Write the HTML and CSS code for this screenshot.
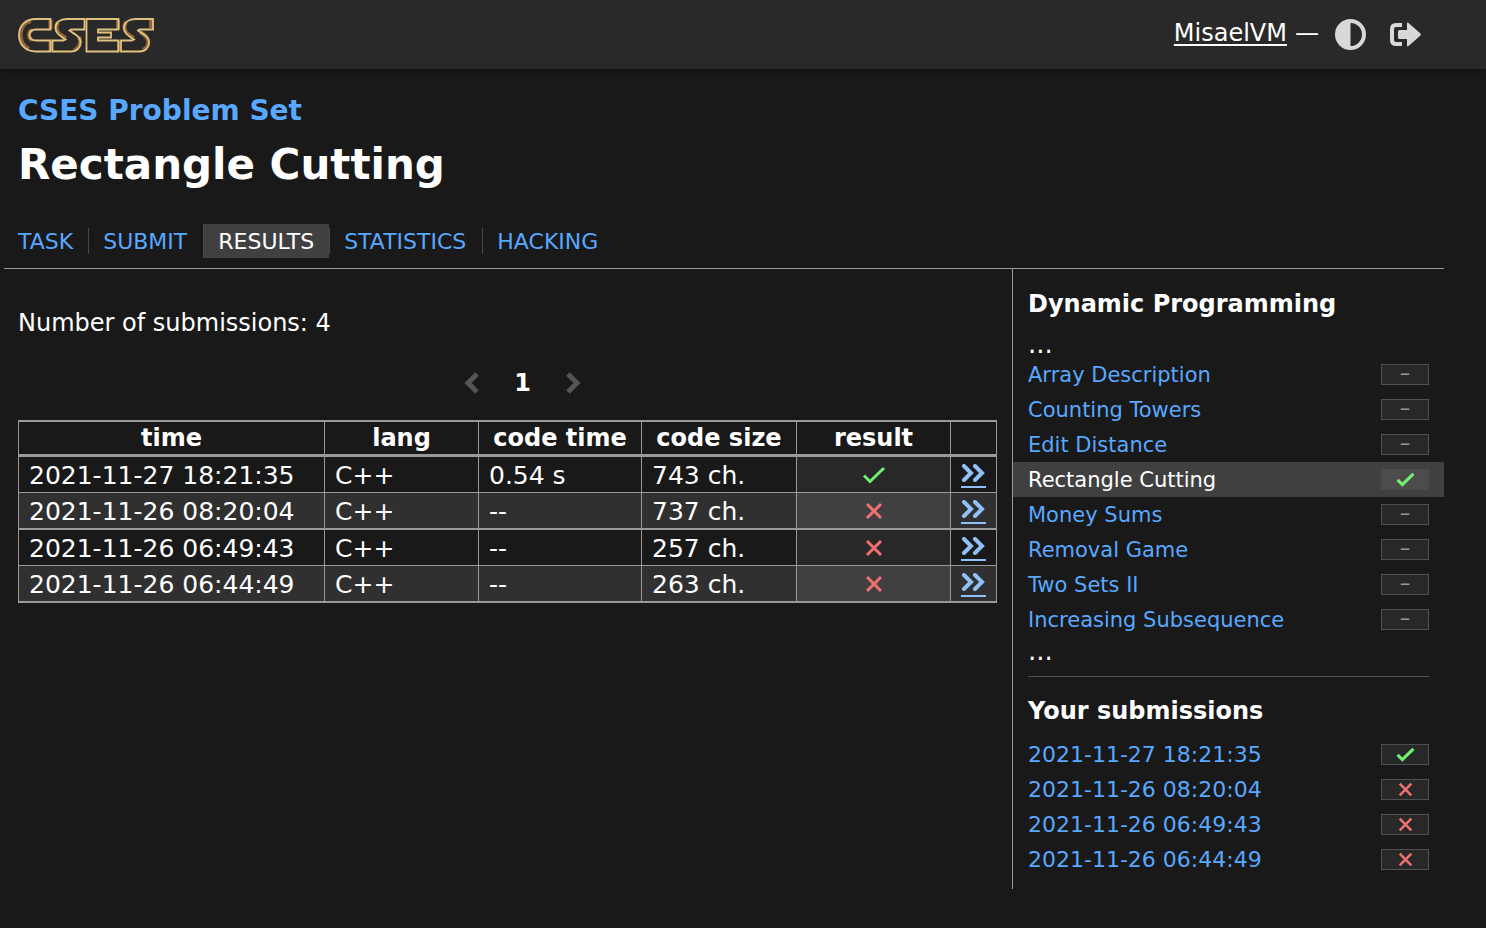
FILE: index.html
```html
<!DOCTYPE html>
<html lang="en">
<head>
<meta charset="utf-8">
<title>CSES - Rectangle Cutting - Results</title>
<link rel="stylesheet" href="styles.css">
</head>
<body>
<svg class="sprite" aria-hidden="true">
  <symbol id="check" viewBox="0 0 24 18"><path d="M2 9.5 8 15.5 22 2"/></symbol>
  <symbol id="cross" viewBox="0 0 18 18"><path d="M2 2 16 16M16 2 2 16"/></symbol>
  <symbol id="more" viewBox="0 0 24 18"><path d="M3 2 10 9 3 16M14 2 21 9 14 16"/></symbol>
</svg>
<header class="header">
  <a class="logo" href="#" aria-label="CSES">
    <svg width="138" height="36" viewBox="17 17 138 36">
      <defs>
        <g id="letters">
          <path d="M50.500 19H36C25 19 19 26 19 35S25 51.500 36 51.500H50.500V40.500H36C32 40.500 29.500 38.500 29.500 35S32 29.500 36 29.500H50.500Z"/>
          <path d="M84.500 19H67C60 19 55.500 22.500 55.500 27.500C55.500 34 61 36 65.500 39.500L63 40.500H52.500V51.500H71C77 51.500 80.500 47.500 80.500 42.500C80.500 36 74 34 69.500 30.500L71 29.500H84.500Z"/>
          <path d="M86.500 19H118.500V29.500H98V32.500H111V37.500H98V40.500H118.500V51.500H86.500Z"/>
          <path d="M84.500 19H67C60 19 55.500 22.500 55.500 27.500C55.500 34 61 36 65.500 39.500L63 40.500H52.500V51.500H71C77 51.500 80.500 47.500 80.500 42.500C80.500 36 74 34 69.500 30.500L71 29.500H84.500Z" transform="translate(68.500)"/>
        </g>
        <linearGradient id="gold" gradientUnits="userSpaceOnUse" x1="18" y1="0" x2="154" y2="0">
          <stop offset="0" stop-color="#e3c084"/><stop offset=".8" stop-color="#e0c37e"/><stop offset="1" stop-color="#fff0e0"/>
        </linearGradient>
      </defs>
      <g class="logo-shade"><path d="M31 21C18 23 17 43 29 49M32 30C28 32 28 38 32 40"/><path d="M58 22C54 29 58 34 66 38M126 22C122 29 126 34 134 38M79 37C82 43 79 48 74 50M140 32C151 38 150 46 143 50M151 20V28M50.500 20V29M50.500 41V51M118 20V29M119 41V51"/></g>
      <use href="#letters" class="logo-line"/>
    </svg>
  </a>
  <div class="controls">
    <a class="user" href="#">MisaelVM</a><span class="dash">—</span>
    <button class="icon-button" aria-label="Toggle theme"><svg width="31" height="31" viewBox="0 0 31 31"><path fill-rule="evenodd" d="M15.500 0a15.500 15.500 0 1 0 0 31a15.500 15.500 0 1 0 0-31ZM15.500 4a11.500 11.500 0 0 1 0 23Z"/></svg></button>
    <button class="icon-button" aria-label="Log out"><svg width="31" height="31" viewBox="0 0 31 31"><path d="M12 4H6Q0 4 0 10V21Q0 27 6 27H12V23H6Q4 23 4 21V10Q4 8 6 8H12ZM17 4.500Q17 3 18.500 4L30.500 14.500Q31 15.500 30.500 16.500L18.500 27Q17 28 17 26.500V20H9.500Q8 20 8 18.500V12.500Q8 11 9.500 11H17Z"/></svg></button>
  </div>
</header>
<div class="page">
  <div class="titles">
    <h3 class="course"><a href="#">CSES Problem Set</a></h3>
    <h1 class="task">Rectangle Cutting</h1>
    <nav class="tabs">
      <a href="#">TASK</a><a href="#">SUBMIT</a><a href="#" class="current">RESULTS</a><a href="#">STATISTICS</a><a href="#">HACKING</a>
    </nav>
  </div>
  <div class="columns">
    <main class="main">
      <p class="count">Number of submissions: 4</p>
      <div class="pager">
        <svg width="16" height="22" viewBox="0 0 16 22"><path d="M13 2 4 11 13 20"/></svg>
        <b>1</b>
        <svg width="16" height="22" viewBox="0 0 16 22"><path d="M3 2 12 11 3 20"/></svg>
      </div>
      <table class="results">
        <colgroup><col class="col-time"><col class="col-lang"><col class="col-ctime"><col class="col-size"><col class="col-result"><col class="col-more"></colgroup>
        <thead><tr><th>time</th><th>lang</th><th>code time</th><th>code size</th><th>result</th><th></th></tr></thead>
        <tbody>
          <tr><td>2021-11-27 18:21:35</td><td>C++</td><td>0.54 s</td><td>743 ch.</td><td class="verdict"><svg class="ok"><use href="#check"/></svg></td><td class="details"><a href="#" aria-label="Details"><svg><use href="#more"/></svg></a></td></tr>
          <tr><td>2021-11-26 08:20:04</td><td>C++</td><td>--</td><td>737 ch.</td><td class="verdict"><svg class="bad"><use href="#cross"/></svg></td><td class="details"><a href="#" aria-label="Details"><svg><use href="#more"/></svg></a></td></tr>
          <tr><td>2021-11-26 06:49:43</td><td>C++</td><td>--</td><td>257 ch.</td><td class="verdict"><svg class="bad"><use href="#cross"/></svg></td><td class="details"><a href="#" aria-label="Details"><svg><use href="#more"/></svg></a></td></tr>
          <tr><td>2021-11-26 06:44:49</td><td>C++</td><td>--</td><td>263 ch.</td><td class="verdict"><svg class="bad"><use href="#cross"/></svg></td><td class="details"><a href="#" aria-label="Details"><svg><use href="#more"/></svg></a></td></tr>
        </tbody>
      </table>
    </main>
    <aside class="sidebar">
      <h4>Dynamic Programming</h4>
      <div class="dots">...</div>
      <div class="list">
        <a href="#">Array Description<span class="score">–</span></a>
        <a href="#">Counting Towers<span class="score">–</span></a>
        <a href="#">Edit Distance<span class="score">–</span></a>
        <a href="#" class="current">Rectangle Cutting<span class="score"><svg class="ok"><use href="#check"/></svg></span></a>
        <a href="#">Money Sums<span class="score">–</span></a>
        <a href="#">Removal Game<span class="score">–</span></a>
        <a href="#">Two Sets II<span class="score">–</span></a>
        <a href="#">Increasing Subsequence<span class="score">–</span></a>
      </div>
      <div class="dots">...</div>
      <hr>
      <h4>Your submissions</h4>
      <div class="list dates">
        <a href="#">2021-11-27 18:21:35<span class="score"><svg class="ok"><use href="#check"/></svg></span></a>
        <a href="#">2021-11-26 08:20:04<span class="score"><svg class="bad"><use href="#cross"/></svg></span></a>
        <a href="#">2021-11-26 06:49:43<span class="score"><svg class="bad"><use href="#cross"/></svg></span></a>
        <a href="#">2021-11-26 06:44:49<span class="score"><svg class="bad"><use href="#cross"/></svg></span></a>
      </div>
    </aside>
  </div>
</div>
</body>
</html>
```
FILE: styles.css
```css
* { box-sizing: border-box; }
body {
  margin: 0;
  background: #191919;
  color: #fff;
  font: 24px/30px Verdana, "DejaVu Sans", sans-serif;
}
a { color: #58a8ff; text-decoration: none; }
h1, h3, h4, p { margin: 0; }
.sprite { display: none; }

.header {
  display: flex;
  justify-content: space-between;
  align-items: center;
  height: 69px;
  padding: 0 65px 0 17px;
  background: #292929;
  box-shadow: 0 0 6px #0c0c0c;
}
.logo svg { display: block; }
.logo-line { fill: none; stroke: url(#gold); stroke-width: 1.8; }
.logo-shade { fill: none; stroke: #a8743e; stroke-width: 4; opacity: .8; }
.controls { display: flex; align-items: center; }
.user { color: #fff; text-decoration: underline; text-underline-offset: 3px; text-decoration-thickness: 2px; padding-bottom: 4px; }
.dash { padding: 0 16px 4px 8px; }
.icon-button { padding: 0; border: 0; background: none; fill: #d8d8d8; }
.icon-button + .icon-button { margin-left: 24px; }
.icon-button svg { display: block; }

.page { margin: 0 42px 0 4px; }
.titles { padding: 24px 14px 10px; border-bottom: 1px solid #999; }
.course { font-size: 28px; line-height: 36px; }
.task { margin: 10px 0 33px; font-size: 42px; line-height: 52px; }
.tabs { display: flex; align-items: center; margin-left: -15px; font-size: 22px; line-height: 24px; }
.tabs a { padding: 2px 16px 0 14px; border-left: 1px solid #484848; }
.tabs a:first-child { padding-left: 15px; padding-right: 15px; border: 0; }
.tabs .current { padding: 6px 15px 4px 14px; background: #404040; color: #fff; }

.columns { display: flex; }
.main { flex: 1; min-width: 0; padding: 39px 15px 0 14px; }
.pager { display: flex; justify-content: center; align-items: center; gap: 34px; margin: 30px 0 22px; padding-left: 30px; }
.pager svg { fill: none; stroke: #555; stroke-width: 5; }

.results { width: 100%; border-collapse: collapse; table-layout: fixed; font-size: 25px; }
.results th, .results td { padding: 2px 10px 0; border: 1px solid #999; line-height: 33px; text-align: left; white-space: nowrap; }
.results th { padding: 0 10px; border-width: 2px 1px 3px; font-size: 24px; line-height: 32px; text-align: center; }
.results tr:nth-child(even) td { border-bottom-width: 2px; background: #303030; }
.results td.verdict { padding-top: 0; background: #282828; text-align: center; }
.results tr:nth-child(even) td.verdict { background: #404040; }
.col-time { width: 306px; }
.col-lang { width: 154px; }
.col-ctime { width: 163px; }
.col-size { width: 155px; }
.col-result { width: 154px; }
.col-more { width: 46px; }
.verdict svg { display: block; width: 24px; height: 18px; margin: 0 auto; }
.ok, .bad { fill: none; stroke: #70f070; stroke-width: 3; }
.bad { stroke: #f07070; }
.details a { display: block; width: 25px; border-bottom: 2px solid #90c0f8; }
.details svg { display: block; width: 24px; height: 18px; margin-bottom: 4px; fill: none; stroke: #90c0f8; stroke-width: 4; stroke-linecap: round; }

.sidebar { flex: 0 0 30%; min-width: 0; padding: 19px 15px 12px; border-left: 1px solid #999; }
.sidebar h4 { margin-bottom: 10px; font-size: 24px; line-height: 32px; }
.dots { padding-top: 2px; font-size: 26px; line-height: 25px; }
.list { margin: 0 -15px; font-size: 21px; }
.dates { font-size: 22px; }
.list a { display: flex; justify-content: space-between; align-items: center; height: 35px; padding: 0 15px; }
.list .current { background: #404040; color: #fff; }
.score { display: flex; justify-content: center; align-items: center; width: 48px; height: 21px; padding-bottom: 3px; border: 1px solid #505050; background: #282828; color: #999; line-height: 16px; }
.score:has(svg) { padding: 0; }
.current .score { border-color: #4c4c4c; background: #4c4c4c; }
.score svg { width: 19px; height: 15px; stroke-width: 4; }
.score .bad { stroke-width: 3; }
.sidebar hr { height: 1px; margin: 12px 0 18px; border: 0; background: #505050; }
```
